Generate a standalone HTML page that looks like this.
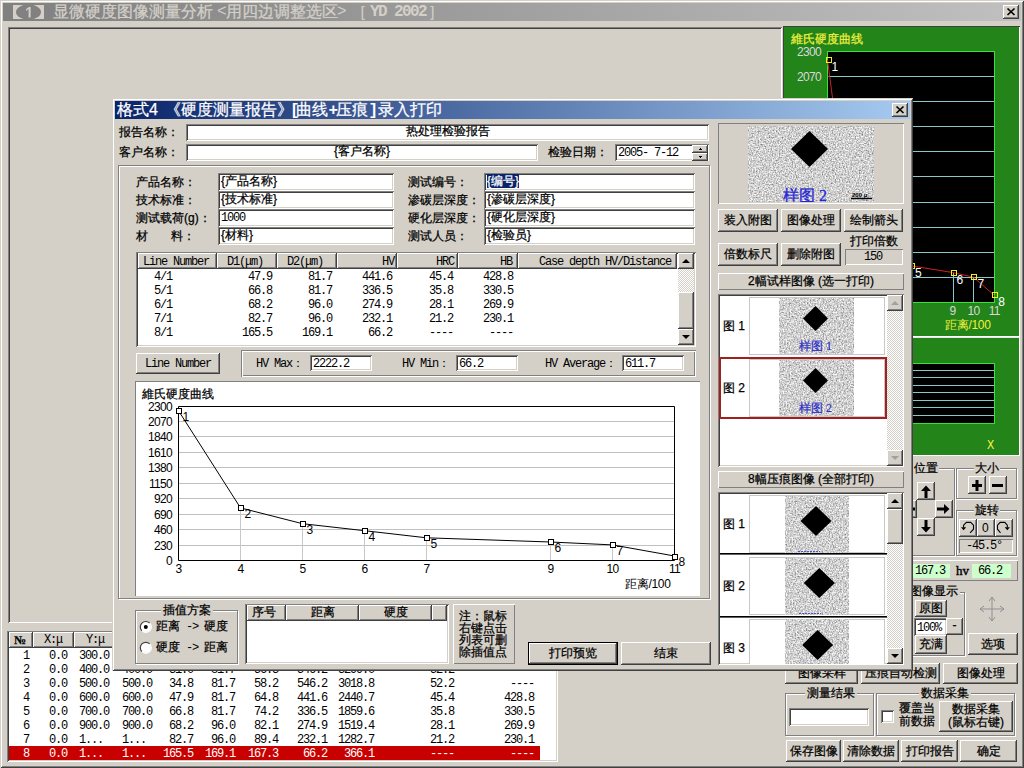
<!DOCTYPE html>
<html><head><meta charset="utf-8">
<style>
*{margin:0;padding:0;box-sizing:border-box}
html,body{width:1024px;height:768px;overflow:hidden;background:#D4D0C8;font-family:"Liberation Sans",sans-serif;font-size:12px;color:#000;-webkit-text-stroke:0.25px currentColor}
.a{position:absolute}
.t{position:absolute;white-space:nowrap;line-height:12px;font-size:12px}
.m{font-family:"Liberation Mono",monospace;letter-spacing:-1.2px;-webkit-text-stroke:0}
.btn{position:absolute;background:#D4D0C8;box-shadow:inset -1px -1px #404040,inset 1px 1px #fff,inset -2px -2px #808080;text-align:center;white-space:nowrap}
.sk{position:absolute;background:#fff;box-shadow:inset 1px 1px #808080,inset -1px -1px #fff,inset 2px 2px #404040,inset -2px -2px #D4D0C8;white-space:nowrap}
.ts{position:absolute;box-shadow:inset 1px 1px #808080,inset -1px -1px #fff}
.tr{position:absolute;box-shadow:inset 1px 1px #fff,inset -1px -1px #808080}
.et{position:absolute;border:1px solid #808080;box-shadow:inset 1px 1px #fff,1px 1px #fff}
.hd{position:absolute;background:#D4D0C8;box-shadow:inset -1px -1px #404040,inset 1px 1px #fff,inset -2px -2px #808080;white-space:nowrap;line-height:16px}
.noise{position:absolute;background:#c4c4c4}
</style></head><body>
<!-- main window frame -->
<div class="a" style="left:0;top:0;width:1024px;height:768px;box-shadow:inset 1px 1px #D4D0C8,inset -1px -1px #404040,inset 2px 2px #fff,inset -2px -2px #808080"></div>
<div class="a" style="left:3px;top:3px;width:1018px;height:18px;background:linear-gradient(to right,#808080,#C0C0C0)"></div>
<svg class="a" style="left:13px;top:5px" width="31" height="14"><rect width="31" height="14" fill="#D4D0C8"/><ellipse cx="15.5" cy="7" rx="12.5" ry="7.6" fill="#818181"/><path d="M16 2l-3 2.3v1.6l2.6-1.8V12.5h2V2z" fill="#D4D0C8"/></svg>
<div class="t" style="left:53px;top:4px;font-size:16px;line-height:16px;color:#D4D0C8">显微硬度图像测量分析</div>
<div class="t" style="left:217px;top:4px;font-size:16px;line-height:16px;color:#D4D0C8;font-family:'Liberation Mono';letter-spacing:-1.6px;-webkit-text-stroke:0">&lt;</div>
<div class="t" style="left:226px;top:4px;font-size:16px;line-height:16px;color:#D4D0C8">用四边调整选区</div>
<div class="t" style="left:337px;top:4px;font-size:16px;line-height:16px;color:#D4D0C8;font-family:'Liberation Mono';letter-spacing:-1.6px;-webkit-text-stroke:0">&gt;</div>
<div class="t" style="left:351px;top:4px;font-size:16px;line-height:16px;color:#D4D0C8">［</div>
<div class="t" style="left:370px;top:4px;font-size:16px;line-height:16px;color:#D4D0C8;font-weight:bold;font-family:'Liberation Mono';letter-spacing:-1.6px;-webkit-text-stroke:0">YD 2002</div>
<div class="t" style="left:428px;top:4px;font-size:16px;line-height:16px;color:#D4D0C8">］</div>
<div class="btn" style="left:1003px;top:5px;width:16px;height:14px"></div>
<svg class="a" style="left:1003px;top:5px" width="16" height="14"><path d="M4.5 3.5L11.5 10M11.5 3.5L4.5 10" stroke="#000" stroke-width="1.7"/></svg>

<!-- main image panel -->
<div class="a" style="left:8px;top:27px;width:774px;height:596px;box-shadow:inset 1px 1px #808080,inset -1px -1px #fff,inset 2px 2px #404040,inset -2px -2px #D4D0C8"></div>


<!-- green chart panel -->
<div class="a" style="left:783px;top:26px;width:237px;height:311px;background:#23841A;box-shadow:inset 1px 1px #404040,inset -1px -1px #fff"></div>
<div class="a" style="left:783px;top:337px;width:237px;height:1px;background:#E8E8E8"></div>
<div class="a" style="left:783px;top:338px;width:237px;height:118px;background:#23841A;box-shadow:inset -1px -1px #fff"></div>
<div class="t" style="left:791px;top:33px;color:#F0F040">維氏硬度曲线</div>
<svg class="a" style="left:783px;top:26px;-webkit-text-stroke:0" width="237" height="430">
<rect x="44.5" y="25.5" width="167.0" height="251.0" fill="#000" stroke="#38E038"/>
<path d="M45.5 50.5H211.0M45.5 75.5H211.0M45.5 100.5H211.0M45.5 125.5H211.0M45.5 150.5H211.0M45.5 176.5H211.0M45.5 201.5H211.0M45.5 226.5H211.0M45.5 251.5H211.0" stroke="#88C8C8"/>
<path d="M65.5 191.3V276.5M86.5 216.9V276.5M107.5 228.3V276.5M128.5 239.8V276.5M170.5 246.5V276.5M190.5 251.2V276.5" stroke="#88C8C8"/>
<polyline fill="none" stroke="#D02020" points="44.5,34.0 65.4,191.3 86.2,216.9 107.0,228.3 127.9,239.8 169.6,246.5 190.5,251.2 211.3,269.3"/>
<rect x="43.5" y="31.5" width="5" height="5" fill="none" stroke="#F0F020"/>
<rect x="63.5" y="188.5" width="5" height="5" fill="none" stroke="#F0F020"/>
<rect x="84.5" y="214.5" width="5" height="5" fill="none" stroke="#F0F020"/>
<rect x="105.5" y="225.5" width="5" height="5" fill="none" stroke="#F0F020"/>
<rect x="126.5" y="237.5" width="5" height="5" fill="none" stroke="#F0F020"/>
<rect x="168.5" y="244.5" width="5" height="5" fill="none" stroke="#F0F020"/>
<rect x="188.5" y="248.5" width="5" height="5" fill="none" stroke="#F0F020"/>
<rect x="209.5" y="266.5" width="5" height="5" fill="none" stroke="#F0F020"/>
<g font-family="Liberation Sans" font-size="12" letter-spacing="-0.7" fill="#fff">
<text x="48.5" y="45.0">1</text>
<text x="69.4" y="202.3">2</text>
<text x="90.2" y="227.9">3</text>
<text x="111.0" y="239.3">4</text>
<text x="131.9" y="250.8">5</text>
<text x="173.6" y="257.5">6</text>
<text x="194.5" y="262.2">7</text>
<text x="215.3" y="280.3">8</text>
</g><g font-family="Liberation Sans" font-size="12" letter-spacing="-0.7" fill="#D8D8D8" text-anchor="end"><text x="38.0" y="29.5">2300</text><text x="38.0" y="55.0">2070</text></g>
<g font-family="Liberation Sans" font-size="12" letter-spacing="-0.7" fill="#D8D8D8" text-anchor="middle">
<text x="169.6" y="289.0">9</text>
<text x="190.5" y="289.0">10</text>
<text x="211.3" y="289.0">11</text>
</g><text x="162.0" y="303.0" font-family="Liberation Sans" font-size="12" fill="#F0F040" letter-spacing="-0.3">距离/100</text>
<rect x="44.5" y="337.5" width="167.0" height="60.0" fill="#000" stroke="#38E038"/>
<path d="M45.5 344.5H211.0M45.5 351.5H211.0M45.5 359.5H211.0M45.5 366.5H211.0M45.5 374.5H211.0M45.5 381.5H211.0M45.5 389.5H211.0" stroke="#88C8C8"/>
<text x="204.0" y="423.0" font-family="Liberation Mono" font-size="12" fill="#F0F040">X</text>
</svg>

<!-- right controls -->
<div class="et" style="left:880px;top:468px;width:75px;height:88px"></div>
<div class="t" style="left:913px;top:462px;background:#D4D0C8;padding:0 1px">位置</div>
<div class="btn" style="left:917px;top:482px;width:18px;height:18px"></div>
<div class="btn" style="left:899px;top:500px;width:18px;height:18px"></div>
<div class="btn" style="left:935px;top:500px;width:18px;height:18px"></div>
<div class="btn" style="left:917px;top:518px;width:18px;height:18px"></div>
<svg class="a" style="left:899px;top:482px" width="54" height="54">
 <path d="M27 3.5l-5 5.5h3.5v7h3v-7H32z" fill="#000"/>
 <path d="M27 50.5l-5-5.5h3.5v-7h3v7H32z" fill="#000"/>
 <path d="M50.5 27l-5.5-5v3.5h-7v3h7V32z" fill="#000"/>
 <path d="M3.5 27l5.5-5v3.5h7v3H9V32z" fill="#000"/>
</svg>
<div class="et" style="left:956px;top:468px;width:61px;height:31px"></div>
<div class="t" style="left:974px;top:462px;background:#D4D0C8;padding:0 1px;font-size:12px">大小</div>
<div class="btn" style="left:968px;top:476px;width:18px;height:18px"></div>
<div class="btn" style="left:989px;top:476px;width:18px;height:18px"></div>
<svg class="a" style="left:968px;top:476px" width="40" height="18"><path d="M4 8h10v3H4zM7.5 4h3v11h-3zM24 8h11v3H24z" fill="#000"/></svg>
<div class="et" style="left:956px;top:510px;width:61px;height:46px"></div>
<div class="t" style="left:974px;top:504px;background:#D4D0C8;padding:0 1px;font-size:12px">旋转</div>
<div class="btn" style="left:959px;top:519px;width:18px;height:18px"></div>
<div class="btn" style="left:977px;top:519px;width:18px;height:18px"></div>
<div class="btn" style="left:995px;top:519px;width:18px;height:18px"></div>
<div class="t" style="left:982px;top:522px;-webkit-text-stroke:0">0</div>
<svg class="a" style="left:959px;top:519px" width="54" height="18">
 <path d="M11.1 13.8L14.5 10.2V6.2L11.7 3.4H7.4L4.6 6.2V8.5M41.5 13.8L38.5 10.2V6.2L41.2 3.4H45.8L48.3 6.2V8.5" fill="none" stroke="#000" stroke-width="1.1"/>
 <path d="M2 8.3H7.2L4.6 11.2zM45.7 8.3H50.9L48.3 11.2z" fill="#000"/>
</svg>
<div class="ts" style="left:959px;top:539px;width:54px;height:14px"></div>
<div class="t m" style="left:966px;top:540px;font-size:12px">-45.5°</div>

<div class="tr" style="left:880px;top:560px;width:138px;height:21px"></div>
<div class="a" style="left:900px;top:564px;width:50px;height:14px;background:#CCFFCC"></div>
<div class="t m" style="left:915px;top:565px;font-size:12px">167.3</div>
<div class="t" style="left:956px;top:565px;font-family:'Liberation Serif';font-size:13px;-webkit-text-stroke:0.4px #000">hv</div>
<div class="a" style="left:972px;top:564px;width:39px;height:14px;background:#CCFFCC"></div>
<div class="t m" style="left:978px;top:565px;font-size:12px">66.2</div>

<div class="et" style="left:880px;top:592px;width:85px;height:64px"></div>
<div class="t" style="left:908px;top:585px;background:#D4D0C8;padding:0 2px;font-size:12px">图像显示</div>
<div class="btn" style="left:915px;top:600px;width:32px;height:17px;line-height:17px">原图</div>
<div class="sk" style="left:914px;top:618px;width:33px;height:18px;line-height:18px;padding-left:3px"><span class="m">100%</span></div>
<div class="btn" style="left:946px;top:618px;width:17px;height:17px;line-height:15px">-</div>
<div class="btn" style="left:915px;top:635px;width:32px;height:19px;line-height:19px">充满</div>
<svg class="a" style="left:977px;top:594px" width="30" height="30"><g stroke="#909090" fill="none"><path d="M15 3V27M3 15H27"/><path d="M12 7l3-4 3 4M12 23l3 4 3-4M7 12l-4 3 4 3M23 12l4 3-4 3"/></g></svg>
<div class="btn" style="left:968px;top:633px;width:50px;height:22px;line-height:22px;font-size:12px">选项</div>

<div class="btn" style="left:785px;top:663px;width:73px;height:21px;line-height:21px;font-size:12px">图像采样</div>
<div class="btn" style="left:861px;top:663px;width:79px;height:21px;line-height:21px;font-size:12px">压痕自动检测</div>
<div class="btn" style="left:943px;top:663px;width:75px;height:21px;line-height:21px;font-size:12px">图像处理</div>
<div class="et" style="left:785px;top:693px;width:89px;height:43px"></div>
<div class="t" style="left:805px;top:687px;background:#D4D0C8;padding:0 2px;font-size:12px">测量结果</div>
<div class="sk" style="left:789px;top:708px;width:80px;height:18px"></div>
<div class="et" style="left:876px;top:693px;width:139px;height:43px"></div>
<div class="t" style="left:919px;top:687px;background:#D4D0C8;padding:0 2px;font-size:12px">数据采集</div>
<div class="sk" style="left:881px;top:710px;width:13px;height:13px"></div>
<div class="t" style="left:899px;top:702px;font-size:12px;line-height:13px">覆盖当<br>前数据</div>
<div class="btn" style="left:939px;top:701px;width:74px;height:31px;line-height:13px;padding-top:2px;font-size:12px">数据采集<br>(鼠标右键)</div>
<div class="btn" style="left:786px;top:740px;width:55px;height:22px;line-height:22px;font-size:12px">保存图像</div>
<div class="btn" style="left:843px;top:740px;width:56px;height:22px;line-height:22px;font-size:12px">清除数据</div>
<div class="btn" style="left:901px;top:740px;width:57px;height:22px;line-height:22px;font-size:12px">打印报告</div>
<div class="btn" style="left:960px;top:740px;width:57px;height:22px;line-height:22px;font-size:12px">确定</div>

<!-- bottom table -->
<div class="a" style="left:7px;top:631px;width:551px;height:131px;background:#fff;box-shadow:inset 1px 1px #808080,inset -1px -1px #fff,inset 2px 2px #404040,inset -2px -2px #D4D0C8"></div>
<div class="hd" style="left:9px;top:632px;width:24px;height:16px"></div>
<div class="hd" style="left:33px;top:632px;width:41px;height:16px"></div>
<div class="hd" style="left:74px;top:632px;width:44px;height:16px"></div>
<div class="t" style="left:14px;top:634px;font-family:'Liberation Serif';font-weight:bold">№</div>
<div class="t m" style="left:44px;top:634px">X:μ</div>
<div class="t m" style="left:86px;top:634px">Y:μ</div>
<div class="a" style="left:9px;top:746px;width:531px;height:14px;background:#C80000"></div>
<div class="t m" style="left:-51px;top:650px;width:80px;text-align:right;color:#000">1</div>
<div class="t m" style="left:-13px;top:650px;width:80px;text-align:right;color:#000">0.0</div>
<div class="t m" style="left:29px;top:650px;width:80px;text-align:right;color:#000">300.0</div>
<div class="t m" style="left:72px;top:650px;width:80px;text-align:right;color:#000">300.0</div>
<div class="t m" style="left:113px;top:650px;width:80px;text-align:right;color:#000">24.5</div>
<div class="t m" style="left:155px;top:650px;width:80px;text-align:right;color:#000">81.7</div>
<div class="t m" style="left:198px;top:650px;width:80px;text-align:right;color:#000">53.1</div>
<div class="t m" style="left:247px;top:650px;width:80px;text-align:right;color:#000">658.0</div>
<div class="t m" style="left:294px;top:650px;width:80px;text-align:right;color:#000">3640.2</div>
<div class="t m" style="left:374px;top:650px;width:80px;text-align:right;color:#000">57.0</div>
<div class="t m" style="left:454px;top:650px;width:80px;text-align:right;color:#000">----</div>
<div class="t m" style="left:-51px;top:664px;width:80px;text-align:right;color:#000">2</div>
<div class="t m" style="left:-13px;top:664px;width:80px;text-align:right;color:#000">0.0</div>
<div class="t m" style="left:29px;top:664px;width:80px;text-align:right;color:#000">400.0</div>
<div class="t m" style="left:72px;top:664px;width:80px;text-align:right;color:#000">400.0</div>
<div class="t m" style="left:113px;top:664px;width:80px;text-align:right;color:#000">31.0</div>
<div class="t m" style="left:155px;top:664px;width:80px;text-align:right;color:#000">81.7</div>
<div class="t m" style="left:198px;top:664px;width:80px;text-align:right;color:#000">56.3</div>
<div class="t m" style="left:247px;top:664px;width:80px;text-align:right;color:#000">546.2</div>
<div class="t m" style="left:294px;top:664px;width:80px;text-align:right;color:#000">3299.0</div>
<div class="t m" style="left:374px;top:664px;width:80px;text-align:right;color:#000">52.2</div>
<div class="t m" style="left:454px;top:664px;width:80px;text-align:right;color:#000">----</div>
<div class="t m" style="left:-51px;top:678px;width:80px;text-align:right;color:#000">3</div>
<div class="t m" style="left:-13px;top:678px;width:80px;text-align:right;color:#000">0.0</div>
<div class="t m" style="left:29px;top:678px;width:80px;text-align:right;color:#000">500.0</div>
<div class="t m" style="left:72px;top:678px;width:80px;text-align:right;color:#000">500.0</div>
<div class="t m" style="left:113px;top:678px;width:80px;text-align:right;color:#000">34.8</div>
<div class="t m" style="left:155px;top:678px;width:80px;text-align:right;color:#000">81.7</div>
<div class="t m" style="left:198px;top:678px;width:80px;text-align:right;color:#000">58.2</div>
<div class="t m" style="left:247px;top:678px;width:80px;text-align:right;color:#000">546.2</div>
<div class="t m" style="left:294px;top:678px;width:80px;text-align:right;color:#000">3018.8</div>
<div class="t m" style="left:374px;top:678px;width:80px;text-align:right;color:#000">52.2</div>
<div class="t m" style="left:454px;top:678px;width:80px;text-align:right;color:#000">----</div>
<div class="t m" style="left:-51px;top:692px;width:80px;text-align:right;color:#000">4</div>
<div class="t m" style="left:-13px;top:692px;width:80px;text-align:right;color:#000">0.0</div>
<div class="t m" style="left:29px;top:692px;width:80px;text-align:right;color:#000">600.0</div>
<div class="t m" style="left:72px;top:692px;width:80px;text-align:right;color:#000">600.0</div>
<div class="t m" style="left:113px;top:692px;width:80px;text-align:right;color:#000">47.9</div>
<div class="t m" style="left:155px;top:692px;width:80px;text-align:right;color:#000">81.7</div>
<div class="t m" style="left:198px;top:692px;width:80px;text-align:right;color:#000">64.8</div>
<div class="t m" style="left:247px;top:692px;width:80px;text-align:right;color:#000">441.6</div>
<div class="t m" style="left:294px;top:692px;width:80px;text-align:right;color:#000">2440.7</div>
<div class="t m" style="left:374px;top:692px;width:80px;text-align:right;color:#000">45.4</div>
<div class="t m" style="left:454px;top:692px;width:80px;text-align:right;color:#000">428.8</div>
<div class="t m" style="left:-51px;top:706px;width:80px;text-align:right;color:#000">5</div>
<div class="t m" style="left:-13px;top:706px;width:80px;text-align:right;color:#000">0.0</div>
<div class="t m" style="left:29px;top:706px;width:80px;text-align:right;color:#000">700.0</div>
<div class="t m" style="left:72px;top:706px;width:80px;text-align:right;color:#000">700.0</div>
<div class="t m" style="left:113px;top:706px;width:80px;text-align:right;color:#000">66.8</div>
<div class="t m" style="left:155px;top:706px;width:80px;text-align:right;color:#000">81.7</div>
<div class="t m" style="left:198px;top:706px;width:80px;text-align:right;color:#000">74.2</div>
<div class="t m" style="left:247px;top:706px;width:80px;text-align:right;color:#000">336.5</div>
<div class="t m" style="left:294px;top:706px;width:80px;text-align:right;color:#000">1859.6</div>
<div class="t m" style="left:374px;top:706px;width:80px;text-align:right;color:#000">35.8</div>
<div class="t m" style="left:454px;top:706px;width:80px;text-align:right;color:#000">330.5</div>
<div class="t m" style="left:-51px;top:720px;width:80px;text-align:right;color:#000">6</div>
<div class="t m" style="left:-13px;top:720px;width:80px;text-align:right;color:#000">0.0</div>
<div class="t m" style="left:29px;top:720px;width:80px;text-align:right;color:#000">900.0</div>
<div class="t m" style="left:72px;top:720px;width:80px;text-align:right;color:#000">900.0</div>
<div class="t m" style="left:113px;top:720px;width:80px;text-align:right;color:#000">68.2</div>
<div class="t m" style="left:155px;top:720px;width:80px;text-align:right;color:#000">96.0</div>
<div class="t m" style="left:198px;top:720px;width:80px;text-align:right;color:#000">82.1</div>
<div class="t m" style="left:247px;top:720px;width:80px;text-align:right;color:#000">274.9</div>
<div class="t m" style="left:294px;top:720px;width:80px;text-align:right;color:#000">1519.4</div>
<div class="t m" style="left:374px;top:720px;width:80px;text-align:right;color:#000">28.1</div>
<div class="t m" style="left:454px;top:720px;width:80px;text-align:right;color:#000">269.9</div>
<div class="t m" style="left:-51px;top:734px;width:80px;text-align:right;color:#000">7</div>
<div class="t m" style="left:-13px;top:734px;width:80px;text-align:right;color:#000">0.0</div>
<div class="t m" style="left:79px;top:734px;color:#000">1...</div>
<div class="t m" style="left:122px;top:734px;color:#000">1...</div>
<div class="t m" style="left:113px;top:734px;width:80px;text-align:right;color:#000">82.7</div>
<div class="t m" style="left:155px;top:734px;width:80px;text-align:right;color:#000">96.0</div>
<div class="t m" style="left:198px;top:734px;width:80px;text-align:right;color:#000">89.4</div>
<div class="t m" style="left:247px;top:734px;width:80px;text-align:right;color:#000">232.1</div>
<div class="t m" style="left:294px;top:734px;width:80px;text-align:right;color:#000">1282.7</div>
<div class="t m" style="left:374px;top:734px;width:80px;text-align:right;color:#000">21.2</div>
<div class="t m" style="left:454px;top:734px;width:80px;text-align:right;color:#000">230.1</div>
<div class="t m" style="left:-51px;top:748px;width:80px;text-align:right;color:#fff">8</div>
<div class="t m" style="left:-13px;top:748px;width:80px;text-align:right;color:#fff">0.0</div>
<div class="t m" style="left:79px;top:748px;color:#fff">1...</div>
<div class="t m" style="left:122px;top:748px;color:#fff">1...</div>
<div class="t m" style="left:113px;top:748px;width:80px;text-align:right;color:#fff">165.5</div>
<div class="t m" style="left:155px;top:748px;width:80px;text-align:right;color:#fff">169.1</div>
<div class="t m" style="left:198px;top:748px;width:80px;text-align:right;color:#fff">167.3</div>
<div class="t m" style="left:247px;top:748px;width:80px;text-align:right;color:#fff">66.2</div>
<div class="t m" style="left:294px;top:748px;width:80px;text-align:right;color:#fff">366.1</div>
<div class="t m" style="left:374px;top:748px;width:80px;text-align:right;color:#fff">----</div>
<div class="t m" style="left:454px;top:748px;width:80px;text-align:right;color:#fff">----</div>

<!-- ============ DIALOG ============ -->
<div class="a" style="left:112px;top:98px;width:801px;height:573px;background:#D4D0C8;box-shadow:inset 1px 1px #D4D0C8,inset -1px -1px #404040,inset 2px 2px #fff,inset -2px -2px #808080"></div>
<div class="a" style="left:115px;top:101px;width:795px;height:18px;background:linear-gradient(to right,#0A246A,#A6CAF0)"></div>
<div class="t" style="left:117px;top:102px;font-size:16px;line-height:16px;color:#fff">格式4</div>
<div class="t" style="left:165px;top:102px;font-size:16px;line-height:16px;color:#fff">《硬度测量报告》</div>
<div class="t" style="left:290px;top:102px;font-size:16px;line-height:16px;color:#fff"><span class="m" style="letter-spacing:-3.2px;font-weight:bold">[</span>曲线<span class="m" style="letter-spacing:-1.6px;font-weight:bold">+</span>压痕<span class="m" style="letter-spacing:-4.6px;font-weight:bold">]</span></div>
<div class="t" style="left:378px;top:102px;font-size:16px;line-height:16px;color:#fff">录入打印</div>
<div class="btn" style="left:892px;top:103px;width:16px;height:14px"></div>
<svg class="a" style="left:892px;top:103px" width="16" height="14"><path d="M4.5 3.5L11.5 10M11.5 3.5L4.5 10" stroke="#000" stroke-width="1.7"/></svg>

<div class="t" style="left:119px;top:126px">报告名称：</div>
<div class="sk" style="left:186px;top:124px;width:523px;height:17px;line-height:15px;text-align:center">热处理检验报告</div>
<div class="t" style="left:119px;top:146px">客户名称：</div>
<div class="sk" style="left:186px;top:144px;width:352px;height:17px;line-height:15px;text-align:center">{客户名称}</div>
<div class="t" style="left:548px;top:146px">检验日期：</div>
<div class="sk" style="left:615px;top:144px;width:94px;height:17px;line-height:16px;padding-left:3px"><span class="m">2005- 7-12</span></div>
<div class="btn" style="left:692px;top:145px;width:16px;height:8px"></div>
<div class="btn" style="left:692px;top:153px;width:16px;height:8px"></div>
<svg class="a" style="left:692px;top:145px" width="16" height="16"><path d="M7 5h3v-1h-1v-1h-1v1h-1zM7 11h3v1h-1v1h-1v-1h-1z" fill="#000"/></svg>

<div class="et" style="left:118px;top:165px;width:592px;height:434px"></div>
<div class="t" style="left:136px;top:176px">产品名称：</div>
<div class="t" style="left:136px;top:194px">技术标准：</div>
<div class="t" style="left:136px;top:212px">测试载荷(g)：</div>
<div class="t" style="left:136px;top:230px">材&nbsp;&nbsp;&nbsp;&nbsp;&nbsp;&nbsp;&nbsp;料：</div>
<div class="sk" style="left:218px;top:173px;width:176px;height:18px;line-height:17px;padding-left:3px">{产品名称}</div>
<div class="sk" style="left:218px;top:191px;width:176px;height:18px;line-height:17px;padding-left:3px">{技术标准}</div>
<div class="sk" style="left:218px;top:209px;width:176px;height:18px;line-height:17px;padding-left:3px"><span class="m">1000</span></div>
<div class="sk" style="left:218px;top:227px;width:176px;height:18px;line-height:17px;padding-left:3px">{材料}</div>
<div class="t" style="left:408px;top:176px">测试编号：</div>
<div class="t" style="left:408px;top:194px">渗碳层深度：</div>
<div class="t" style="left:408px;top:212px">硬化层深度：</div>
<div class="t" style="left:408px;top:230px">测试人员：</div>
<div class="sk" style="left:484px;top:173px;width:211px;height:18px;line-height:17px;padding-left:3px"><span style="background:#0A246A;color:#fff">{编号}</span></div>
<div class="sk" style="left:484px;top:191px;width:211px;height:18px;line-height:17px;padding-left:3px">{渗碳层深度}</div>
<div class="sk" style="left:484px;top:209px;width:211px;height:18px;line-height:17px;padding-left:3px">{硬化层深度}</div>
<div class="sk" style="left:484px;top:227px;width:211px;height:18px;line-height:17px;padding-left:3px">{检验员}</div>

<!-- list view -->
<div class="sk" style="left:136px;top:252px;width:560px;height:95px"></div>
<div class="hd" style="left:138px;top:253px;width:79px;height:16px"></div>
<div class="hd" style="left:217px;top:253px;width:60px;height:16px"></div>
<div class="hd" style="left:277px;top:253px;width:60px;height:16px"></div>
<div class="hd" style="left:337px;top:253px;width:60px;height:16px"></div>
<div class="hd" style="left:397px;top:253px;width:61px;height:16px"></div>
<div class="hd" style="left:458px;top:253px;width:60px;height:16px"></div>
<div class="hd" style="left:518px;top:253px;width:159px;height:16px"></div>
<div class="t m" style="left:143px;top:256px">Line Number</div>
<div class="t m" style="left:227px;top:256px">D1(μm)</div>
<div class="t m" style="left:287px;top:256px">D2(μm)</div>
<div class="t m" style="left:376px;top:256px;width:18px;text-align:right">HV</div>
<div class="t m" style="left:430px;top:256px;width:24px;text-align:right">HRC</div>
<div class="t m" style="left:494px;top:256px;width:18px;text-align:right">HB</div>
<div class="t m" style="left:539px;top:256px">Case depth HV/Distance</div>
<div class="t m" style="left:154px;top:271px">4/1</div>
<div class="t m" style="left:212px;top:271px;width:60px;text-align:right">47.9</div>
<div class="t m" style="left:272px;top:271px;width:60px;text-align:right">81.7</div>
<div class="t m" style="left:332px;top:271px;width:60px;text-align:right">441.6</div>
<div class="t m" style="left:393px;top:271px;width:60px;text-align:right">45.4</div>
<div class="t m" style="left:453px;top:271px;width:60px;text-align:right">428.8</div>
<div class="t m" style="left:154px;top:285px">5/1</div>
<div class="t m" style="left:212px;top:285px;width:60px;text-align:right">66.8</div>
<div class="t m" style="left:272px;top:285px;width:60px;text-align:right">81.7</div>
<div class="t m" style="left:332px;top:285px;width:60px;text-align:right">336.5</div>
<div class="t m" style="left:393px;top:285px;width:60px;text-align:right">35.8</div>
<div class="t m" style="left:453px;top:285px;width:60px;text-align:right">330.5</div>
<div class="t m" style="left:154px;top:299px">6/1</div>
<div class="t m" style="left:212px;top:299px;width:60px;text-align:right">68.2</div>
<div class="t m" style="left:272px;top:299px;width:60px;text-align:right">96.0</div>
<div class="t m" style="left:332px;top:299px;width:60px;text-align:right">274.9</div>
<div class="t m" style="left:393px;top:299px;width:60px;text-align:right">28.1</div>
<div class="t m" style="left:453px;top:299px;width:60px;text-align:right">269.9</div>
<div class="t m" style="left:154px;top:313px">7/1</div>
<div class="t m" style="left:212px;top:313px;width:60px;text-align:right">82.7</div>
<div class="t m" style="left:272px;top:313px;width:60px;text-align:right">96.0</div>
<div class="t m" style="left:332px;top:313px;width:60px;text-align:right">232.1</div>
<div class="t m" style="left:393px;top:313px;width:60px;text-align:right">21.2</div>
<div class="t m" style="left:453px;top:313px;width:60px;text-align:right">230.1</div>
<div class="t m" style="left:154px;top:327px">8/1</div>
<div class="t m" style="left:212px;top:327px;width:60px;text-align:right">165.5</div>
<div class="t m" style="left:272px;top:327px;width:60px;text-align:right">169.1</div>
<div class="t m" style="left:332px;top:327px;width:60px;text-align:right">66.2</div>
<div class="t m" style="left:393px;top:327px;width:60px;text-align:right">----</div>
<div class="t m" style="left:453px;top:327px;width:60px;text-align:right">----</div>
<div class="a" style="left:678px;top:269px;width:16px;height:60px;background:repeating-conic-gradient(#fff 0 25%,#D4D0C8 0 50%) 0 0/2px 2px"></div>
<div class="btn" style="left:678px;top:253px;width:16px;height:16px"></div>
<div class="btn" style="left:678px;top:292px;width:16px;height:37px"></div>
<div class="btn" style="left:678px;top:329px;width:16px;height:16px"></div>
<svg class="a" style="left:678px;top:253px" width="16" height="92"><path d="M4 10h8l-4-4z M4 82h8l-4 4z" fill="#000"/></svg>

<!-- stats -->
<div class="btn" style="left:136px;top:353px;width:84px;height:21px;line-height:20px"><span class="m">Line Number</span></div>
<div class="a" style="left:241px;top:350px;width:455px;height:27px;box-shadow:inset 1px 1px #808080,inset -1px -1px #fff,inset 2px 2px #fff,inset -2px -2px #808080"></div>
<div class="t m" style="left:256px;top:358px">HV Max：</div>
<div class="sk" style="left:310px;top:355px;width:62px;height:16px;line-height:16px;padding-left:3px"><span class="m">2222.2</span></div>
<div class="t m" style="left:402px;top:358px">HV Min：</div>
<div class="sk" style="left:456px;top:355px;width:62px;height:16px;line-height:16px;padding-left:3px"><span class="m">66.2</span></div>
<div class="t m" style="left:545px;top:358px">HV Average：</div>
<div class="sk" style="left:622px;top:355px;width:62px;height:16px;line-height:16px;padding-left:3px"><span class="m">611.7</span></div>

<!-- chart -->
<div class="a" style="left:135px;top:381px;width:565px;height:215px;background:#fff;box-shadow:inset 1px 1px #808080"></div>
<div class="t" style="left:142px;top:388px">維氏硬度曲线</div>
<svg class="a" style="left:135px;top:381px;-webkit-text-stroke:0" width="565" height="215">
<path d="M43.5 164.5H539.5M43.5 148.5H539.5M43.5 133.5H539.5M43.5 117.5H539.5M43.5 102.5H539.5M43.5 86.5H539.5M43.5 71.5H539.5M43.5 55.5H539.5M43.5 40.5H539.5" stroke="#C0C0C0"/>
<path d="M105.5 126.9V179.5M167.5 142.7V179.5M229.5 149.7V179.5M291.5 156.8V179.5M415.5 161.0V179.5M477.5 163.9V179.5" stroke="#C8C8C8"/>
<path d="M43.5 25.5H539.5V179.5H43.5z" fill="none" stroke="#000"/>
<polyline fill="none" stroke="#000" points="43.5,29.7 105.5,126.9 167.5,142.7 229.5,149.7 291.5,156.8 415.5,161.0 477.5,163.9 539.5,175.0"/>
<rect x="41.5" y="27.5" width="5" height="5" fill="#fff" stroke="#000"/>
<rect x="103.5" y="124.5" width="5" height="5" fill="#fff" stroke="#000"/>
<rect x="165.5" y="140.5" width="5" height="5" fill="#fff" stroke="#000"/>
<rect x="227.5" y="147.5" width="5" height="5" fill="#fff" stroke="#000"/>
<rect x="289.5" y="154.5" width="5" height="5" fill="#fff" stroke="#000"/>
<rect x="413.5" y="158.5" width="5" height="5" fill="#fff" stroke="#000"/>
<rect x="475.5" y="161.5" width="5" height="5" fill="#fff" stroke="#000"/>
<rect x="537.5" y="173.5" width="5" height="5" fill="#fff" stroke="#000"/>
<g font-family="Liberation Sans" font-size="12" letter-spacing="-0.7" fill="#000">
<text x="47.5" y="39.7">1</text>
<text x="109.5" y="136.9">2</text>
<text x="171.5" y="152.7">3</text>
<text x="233.5" y="159.7">4</text>
<text x="295.5" y="166.8">5</text>
<text x="419.5" y="171.0">6</text>
<text x="481.5" y="173.9">7</text>
<text x="543.5" y="185.0">8</text>
</g><g font-family="Liberation Sans" font-size="12" letter-spacing="-0.7" fill="#000" text-anchor="end">
<text x="37.0" y="184.0">0</text>
<text x="37.0" y="169.0">230</text>
<text x="37.0" y="153.0">460</text>
<text x="37.0" y="138.0">690</text>
<text x="37.0" y="122.0">920</text>
<text x="37.0" y="107.0">1150</text>
<text x="37.0" y="91.0">1380</text>
<text x="37.0" y="76.0">1610</text>
<text x="37.0" y="60.0">1840</text>
<text x="37.0" y="45.0">2070</text>
<text x="37.0" y="30.0">2300</text>
</g><g font-family="Liberation Sans" font-size="12" letter-spacing="-0.7" fill="#000" text-anchor="middle">
<text x="43.5" y="191.5">3</text>
<text x="105.5" y="191.5">4</text>
<text x="167.5" y="191.5">5</text>
<text x="229.5" y="191.5">6</text>
<text x="291.5" y="191.5">7</text>
<text x="415.5" y="191.5">9</text>
<text x="477.5" y="191.5">10</text>
<text x="539.5" y="191.5">11</text>
</g><text x="490.0" y="207.0" font-family="Liberation Sans" font-size="12" fill="#000" letter-spacing="-0.3">距离/100</text>
</svg>

<!-- bottom section -->
<div class="et" style="left:135px;top:610px;width:103px;height:54px"></div>
<div class="t" style="left:161px;top:604px;background:#D4D0C8;padding:0 2px;font-size:12px">插值方案</div>
<svg class="a" style="left:139px;top:619px" width="14" height="36"><circle cx="6.8" cy="8.0" r="5" fill="#fff"/><path d="M2.91 11.89A5.5 5.5 0 0 1 10.69 4.11" fill="none" stroke="#404040" stroke-width="1.2"/><path d="M10.69 4.11A5.5 5.5 0 0 1 2.91 11.89" fill="none" stroke="#fff" stroke-width="1.2"/><circle cx="6.8" cy="8.0" r="2" fill="#000"/><circle cx="6.8" cy="28.8" r="5" fill="#fff"/><path d="M2.91 32.69A5.5 5.5 0 0 1 10.69 24.91" fill="none" stroke="#404040" stroke-width="1.2"/><path d="M10.69 24.91A5.5 5.5 0 0 1 2.91 32.69" fill="none" stroke="#fff" stroke-width="1.2"/></svg>
<div class="t" style="left:156px;top:620px;font-size:12px">距离<span class="m"> -&gt; </span>硬度</div>
<div class="t" style="left:156px;top:641px;font-size:12px">硬度<span class="m"> -&gt; </span>距离</div>
<div class="sk" style="left:245px;top:604px;width:204px;height:60px"></div>
<div class="hd" style="left:247px;top:605px;width:39px;height:16px;line-height:15px;padding-left:5px">序号</div>
<div class="hd" style="left:286px;top:605px;width:73px;height:16px;line-height:15px;text-align:center">距离</div>
<div class="hd" style="left:359px;top:605px;width:73px;height:16px;line-height:15px;text-align:center">硬度</div>
<div class="hd" style="left:432px;top:605px;width:15px;height:16px"></div>
<div class="tr" style="left:453px;top:604px;width:62px;height:60px"></div>
<div class="t" style="left:459px;top:610px;line-height:12px">注：鼠标<br>右键点击<br>列表可删<br>除插值点</div>
<div class="a" style="left:528px;top:642px;width:90px;height:23px;border:1px solid #000"></div>
<div class="btn" style="left:529px;top:643px;width:88px;height:21px;line-height:20px;font-size:12px">打印预览</div>
<div class="btn" style="left:621px;top:642px;width:90px;height:23px;line-height:22px;font-size:12px">结束</div>

<!-- right pane -->
<svg width="0" height="0" style="position:absolute"><defs>
<filter id="nz" x="0" y="0" width="100%" height="100%"><feTurbulence type="fractalNoise" baseFrequency="0.7" numOctaves="2" seed="3"/><feColorMatrix type="matrix" values="1.3 0 0 0 -0.02  1.3 0 0 0 -0.02  1.3 0 0 0 -0.02  0 0 0 0 1"/></filter>
</defs></svg>
<div class="ts" style="left:718px;top:123px;width:186px;height:81px"></div>
<svg class="a" style="left:748px;top:126px" width="126" height="76"><rect width="126" height="76" filter="url(#nz)"/>
 <path d="M61.5 5L80 23 61.5 41 43 23z" fill="#000"/>
 <text x="35" y="75" font-family="Liberation Serif" font-size="16" fill="#2828D8" stroke="#2828D8" stroke-width="0.3">样图 2</text>
 <path d="M103 72.5H124" stroke="#000" stroke-width="1.5"/>
 <text x="104" y="71" font-family="Liberation Sans" font-weight="bold" font-size="6" fill="#000">200 μ</text>
</svg>
<div class="btn" style="left:718px;top:209px;width:60px;height:23px;line-height:22px;font-size:12px">装入附图</div>
<div class="btn" style="left:781px;top:209px;width:60px;height:23px;line-height:22px;font-size:12px">图像处理</div>
<div class="btn" style="left:844px;top:209px;width:59px;height:23px;line-height:22px;font-size:12px">绘制箭头</div>
<div class="btn" style="left:718px;top:243px;width:60px;height:23px;line-height:22px;font-size:12px">倍数标尺</div>
<div class="btn" style="left:781px;top:243px;width:60px;height:23px;line-height:22px;font-size:12px">删除附图</div>
<div class="t" style="left:850px;top:235px;font-size:12px">打印倍数</div>
<div class="ts" style="left:845px;top:249px;width:58px;height:16px"></div>
<div class="t m" style="left:864px;top:251px;font-size:12px">150</div>

<div class="hd" style="left:718px;top:273px;width:186px;height:17px;line-height:16px;text-align:center;box-shadow:inset 1px 1px #fff,inset -1px -1px #808080;font-size:12px">2幅试样图像 (选一打印)</div>
<div class="sk" style="left:718px;top:294px;width:186px;height:173px"></div>
<div class="a" style="left:887px;top:311px;width:16px;height:139px;background:repeating-conic-gradient(#fff 0 25%,#D4D0C8 0 50%) 0 0/2px 2px"></div>
<div class="btn" style="left:887px;top:295px;width:16px;height:16px"></div>
<div class="btn" style="left:887px;top:450px;width:16px;height:16px"></div>
<svg class="a" style="left:887px;top:295px" width="16" height="171"><path d="M4 10h8l-4-4z M4 161h8l-4 4z" fill="#A0A0A0"/></svg>

<div class="a" style="left:749px;top:297px;width:136px;height:58px;border:1px solid #C8C8C8;background:#fff"></div>
<svg class="a" style="left:779px;top:298px" width="75" height="56"><rect width="75" height="56" fill="#c4c4c4"/><rect width="75" height="56" filter="url(#nz)"/>
 <path d="M36.5 8L49 20.5 36.5 33 24 20.5z" fill="#000"/>
 <text x="20" y="52" font-family="Liberation Serif" font-size="12" fill="#3030C8" stroke="#3030C8" stroke-width="0.2">样图 1</text></svg>
<div class="t" style="left:723px;top:320px;font-size:12px">图 1</div>

<div class="a" style="left:719px;top:357px;width:168px;height:62px;border:2px solid #A02020"></div>
<div class="a" style="left:749px;top:359px;width:136px;height:58px;border:1px solid #C8C8C8;background:#fff"></div>
<svg class="a" style="left:779px;top:360px" width="75" height="56"><rect width="75" height="56" fill="#c4c4c4"/><rect width="75" height="56" filter="url(#nz)"/>
 <path d="M36.5 8L49 20.5 36.5 33 24 20.5z" fill="#000"/>
 <text x="20" y="52" font-family="Liberation Serif" font-size="12" fill="#3030C8" stroke="#3030C8" stroke-width="0.2">样图 2</text></svg>
<div class="t" style="left:723px;top:382px;font-size:12px">图 2</div>

<div class="hd" style="left:718px;top:471px;width:186px;height:17px;line-height:16px;text-align:center;box-shadow:inset 1px 1px #fff,inset -1px -1px #808080;font-size:12px">8幅压痕图像 (全部打印)</div>
<div class="sk" style="left:718px;top:492px;width:186px;height:173px;overflow:hidden"></div>
<div class="a" style="left:887px;top:509px;width:16px;height:139px;background:repeating-conic-gradient(#fff 0 25%,#D4D0C8 0 50%) 0 0/2px 2px"></div>
<div class="btn" style="left:887px;top:493px;width:16px;height:16px"></div>
<div class="btn" style="left:887px;top:509px;width:16px;height:35px"></div>
<div class="btn" style="left:887px;top:648px;width:16px;height:16px"></div>
<svg class="a" style="left:887px;top:493px" width="16" height="171"><path d="M4 10h8l-4-4z M4 161h8l-4 4z" fill="#000"/></svg>
<div class="a" style="left:720px;top:553px;width:167px;height:2px;background:linear-gradient(#000 50%,#606060 50%)"></div>
<div class="a" style="left:720px;top:616px;width:167px;height:2px;background:linear-gradient(#000 50%,#606060 50%)"></div>
<div class="a" style="left:749px;top:495px;width:136px;height:58px;border:1px solid #C8C8C8;border-bottom-width:1px;background:#fff"></div>
<svg class="a" style="left:785px;top:496px" width="64" height="57"><rect width="64" height="57" filter="url(#nz)"/><path d="M31 10L46.5 25 31 40 15.5 25z" fill="#000"/><path d="M13 55.5H35" stroke="#5050D0" stroke-dasharray="2 1"/></svg>
<div class="t" style="left:723px;top:518px;font-size:12px">图 1</div>
<div class="a" style="left:749px;top:557px;width:136px;height:58px;border:1px solid #C8C8C8;border-bottom-width:1px;background:#fff"></div>
<svg class="a" style="left:785px;top:558px" width="64" height="57"><rect width="64" height="57" filter="url(#nz)"/><path d="M34.3 10L49.8 25 34.3 40 18.8 25z" fill="#000"/><path d="M14 55.5H36" stroke="#5050D0" stroke-dasharray="2 1"/></svg>
<div class="t" style="left:723px;top:580px;font-size:12px">图 2</div>
<div class="a" style="left:749px;top:619px;width:136px;height:45px;border:1px solid #C8C8C8;border-bottom-width:0px;background:#fff"></div>
<svg class="a" style="left:785px;top:619px" width="64" height="45"><rect width="64" height="45" filter="url(#nz)"/><path d="M32.6 11L48.1 26 32.6 41 17.1 26z" fill="#000"/></svg>
<div class="t" style="left:723px;top:642px;font-size:12px">图 3</div>
</body></html>
